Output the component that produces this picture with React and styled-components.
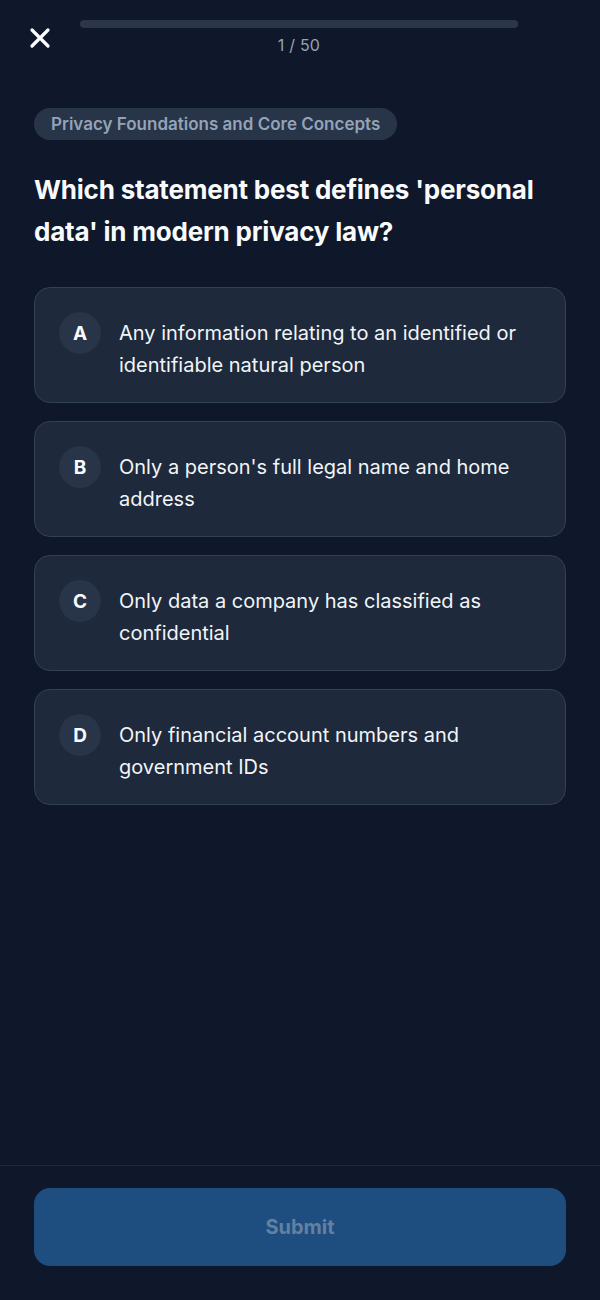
import React, { useState } from "react";
import styled, { createGlobalStyle } from "styled-components";

const GlobalStyle = createGlobalStyle`
    html, body {
        margin: 0;
        padding: 0;
        background-color: #0f172a;
    }
    * {
        box-sizing: border-box;
    }
    body {
        font-family: Inter, "Noto Sans", "Liberation Sans", sans-serif;
        color: #f8fafc;
    }
`;

const Page = styled.div`
    min-height: 100vh;
    display: flex;
    flex-direction: column;
    background-color: #0f172a;
`;

const Header = styled.div`
    display: flex;
    align-items: flex-start;
    gap: 28px;
    padding: 20px 82px 0 28px;
`;

const CloseBtn = styled.button`
    width: 24px;
    height: 24px;
    margin-top: 6px;
    padding: 0;
    border: none;
    background: none;
    color: white;
    cursor: pointer;
    display: flex;
    align-items: center;
    justify-content: center;
`;

const ProgressWrap = styled.div`
    flex: 1;
    display: flex;
    flex-direction: column;
    align-items: center;
    gap: 7px;
`;

const Track = styled.div`
    width: 100%;
    height: 8px;
    border-radius: 4px;
    background-color: #2b3649;
    overflow: hidden;
`;

const Fill = styled.div`
    height: 100%;
    background-color: #3b82f6;
`;

const Counter = styled.div`
    font-size: 16px;
    color: #94a3b8;
    letter-spacing: 0.2px;
`;

const Content = styled.main`
    flex: 1;
    padding: 53px 34px 0;
`;

const Chip = styled.div`
    display: inline-flex;
    align-items: center;
    height: 32px;
    padding: 0 17px;
    border-radius: 16px;
    background-color: #283447;
    color: #94a3b8;
    font-size: 17px;
    font-weight: 600;
`;

const Question = styled.h1`
    margin: 29px 0 34px;
    font-size: 26px;
    line-height: 42px;
    font-weight: 700;
    color: #f8fafc;
    letter-spacing: -0.2px;
`;

const Options = styled.div`
    display: flex;
    flex-direction: column;
    gap: 18px;
`;

const Option = styled.button`
    display: flex;
    align-items: flex-start;
    gap: 18px;
    width: 100%;
    min-height: 116px;
    padding: 29px 24px 21px;
    border-radius: 16px;
    border: 1px solid ${(p) => (p.$selected ? "#3b82f6" : "#334155")};
    background-color: ${(p) => (p.$selected ? "#1e3a5f" : "#1e293b")};
    text-align: left;
    cursor: pointer;
    font-family: inherit;
`;

const Letter = styled.span`
    flex: none;
    width: 42px;
    height: 42px;
    margin-top: -5px;
    border-radius: 50%;
    background-color: #283447;
    color: #f8fafc;
    font-size: 19px;
    font-weight: 700;
    display: flex;
    align-items: center;
    justify-content: center;
`;

const OptionText = styled.span`
    font-size: 20px;
    line-height: 32px;
    color: #f1f5f9;
`;

const Footer = styled.footer`
    border-top: 1px solid #1e293b;
    padding: 22px 34px 34px;
`;

const SubmitBtn = styled.button`
    width: 100%;
    height: 78px;
    border: none;
    border-radius: 16px;
    background-color: #1e4d80;
    color: #64809f;
    font-family: inherit;
    font-size: 20px;
    font-weight: 700;
    cursor: ${(p) => (p.disabled ? "default" : "pointer")};
`;

const options = [
    { key: "A", text: "Any information relating to an identified or identifiable natural person" },
    { key: "B", text: "Only a person's full legal name and home address" },
    { key: "C", text: "Only data a company has classified as confidential" },
    { key: "D", text: "Only financial account numbers and government IDs" },
];

const App = () => {
    const [selected, setSelected] = useState(null);
    const current = 1;
    const total = 50;

    return (
        <Page>
            <GlobalStyle />
            <Header>
                <CloseBtn aria-label="Close">
                    <svg width="24" height="24" viewBox="0 0 24 24" fill="none" stroke="currentColor" strokeWidth="3.2" strokeLinecap="round">
                        <path d="M4 4 L20 20 M20 4 L4 20" />
                    </svg>
                </CloseBtn>
                <ProgressWrap>
                    <Track>
                        <Fill style={{ width: `${((current - 1) / total) * 100}%` }} />
                    </Track>
                    <Counter>{current} / {total}</Counter>
                </ProgressWrap>
            </Header>
            <Content>
                <Chip>Privacy Foundations and Core Concepts</Chip>
                <Question>Which statement best defines 'personal data' in modern privacy law?</Question>
                <Options>
                    {options.map((o) => (
                        <Option key={o.key} $selected={selected === o.key} onClick={() => setSelected(o.key)}>
                            <Letter>{o.key}</Letter>
                            <OptionText>{o.text}</OptionText>
                        </Option>
                    ))}
                </Options>
            </Content>
            <Footer>
                <SubmitBtn disabled={!selected}>Submit</SubmitBtn>
            </Footer>
        </Page>
    );
};

export default App;
